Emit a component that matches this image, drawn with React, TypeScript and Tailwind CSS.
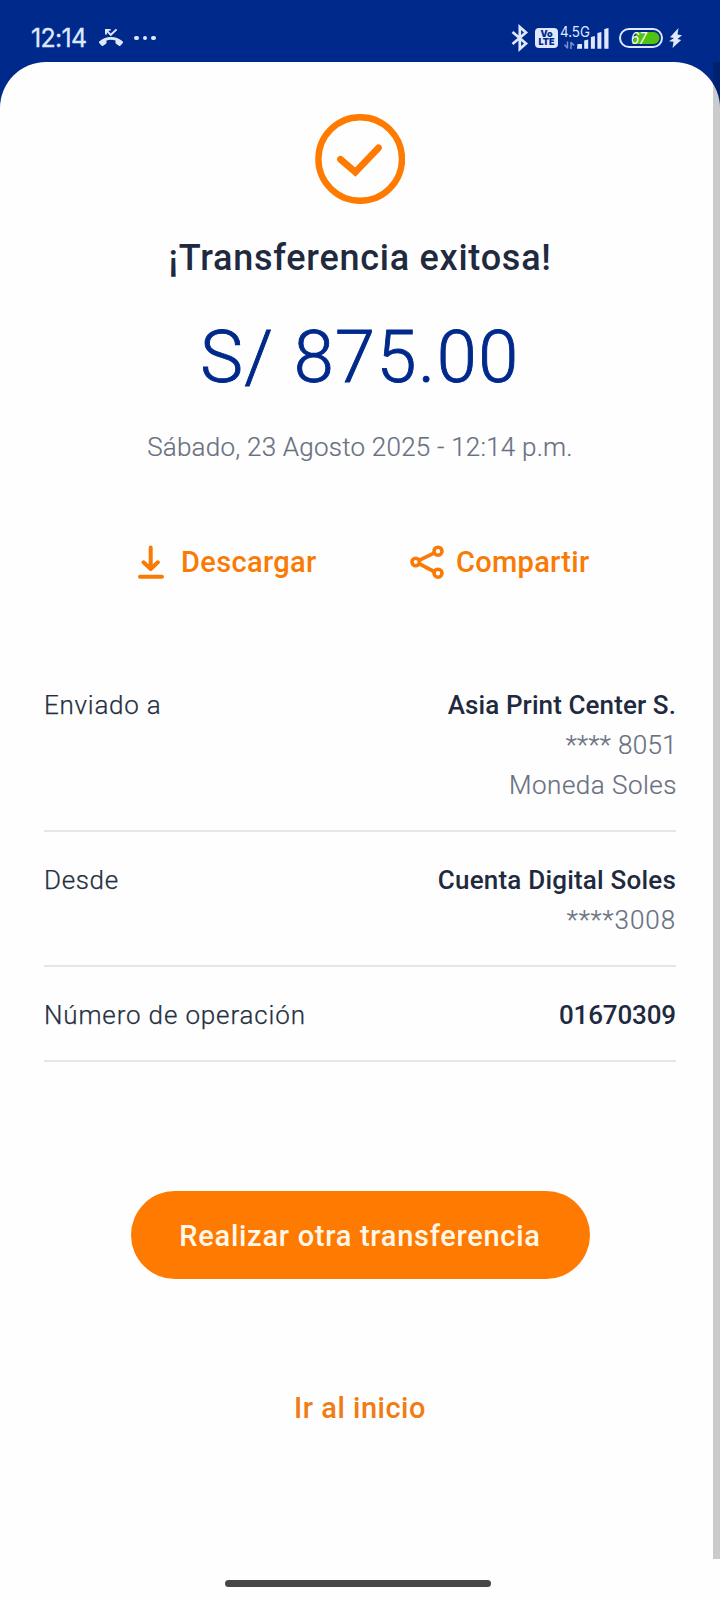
import type { ReactNode } from "react";

function MissedCallIcon() {
  return (
    <svg width="26" height="20" viewBox="0 0 26 20" className="ml-[11px]" fill="none">
      <path
        d="M1.200 13.600C4 10.600 8.200 8.900 13 8.900s9 1.700 11.800 4.700c.4.4.4 1 0 1.400l-2.500 2.700c-.4.4-1 .4-1.400.1l-2.900-2c-.4-.3-.5-.6-.5-1v-2.400c-1.400-.5-2.900-.7-4.500-.7s-3.100.2-4.500.7v2.400c0 .4-.2.8-.5 1l-2.900 2c-.4.3-1 .3-1.400-.1l-2.500-2.700c-.4-.4-.4-1 0-1.400z"
        fill="#dfe8ff"
      />
      <path d="M8 6.500V1.900h4.600M8.200 2.100l4.600 4.700 5.800-5.400" stroke="#dfe8ff" strokeWidth="1.900" />
    </svg>
  );
}

function StatusBar() {
  return (
    <header className="flex h-[62px] items-start justify-between pt-[23px] pr-[38px] pl-[31px] text-[#dfe8ff]">
      <div className="flex h-[30px] items-center">
        <span className="w-[56px] font-['Inter',sans-serif] text-[25px] leading-[30px] tracking-[-0.7px] whitespace-nowrap [-webkit-text-stroke:0.3px]">
          12:14
        </span>
        <MissedCallIcon />
        <div className="ml-[10px] flex gap-1">
          <i className="size-[4.500px] rounded-full bg-[#dfe8ff]" />
          <i className="size-[4.500px] rounded-full bg-[#dfe8ff]" />
          <i className="size-[4.500px] rounded-full bg-[#dfe8ff]" />
        </div>
      </div>
      <div className="flex h-[30px] items-center">
        <svg width="18" height="28" viewBox="0 0 18 28" fill="none" stroke="#dfe8ff" strokeWidth="2.700">
          <path d="M1.500 8l13.500 11.500-6.200 5.500V3l6.200 5.500L1.500 20" />
        </svg>
        <div className="ml-[6px] flex h-5 w-[23px] flex-col items-center justify-center rounded-[4px] bg-[#dfe8ff] font-['Inter',sans-serif] text-[9px] leading-[8px] font-black text-[#00298c]">
          <span>Vo</span>
          <span>LTE</span>
        </div>
        <svg width="51" height="28" viewBox="0 0 51 28" className="ml-[2px]" fill="#dfe8ff">
          <text x="0" y="13" fontFamily="Inter, sans-serif" fontSize="14.500" textLength="30" lengthAdjust="spacingAndGlyphs">
            4.5G
          </text>
          <path d="M17.500 20h4.500v4.700h-5zM24.200 16.500l4-1v9.200h-4zM30.900 13l4-1v12.700h-4zM37.400 9l4-1v16.700h-4zM44.300 5l4.200-1v20.700h-4.200z" />
          <path d="M7.500 17.500v7M7.500 24l-3-3.200M11 25v-7M11 18.200l3 3.200" stroke="#7d93cf" strokeWidth="1.500" fill="none" />
        </svg>
        <svg width="44" height="20" viewBox="0 0 44 20" className="ml-[8px]">
          <path d="M18 4h16.500a6 6 0 0 1 0 12H13z" fill="#4fc410" />
          <rect x="1" y="1" width="42" height="18" rx="9" fill="none" stroke="#dfe8ff" strokeWidth="2" />
          <text x="12" y="15.500" fill="#ffffff" fontFamily="Inter, sans-serif" fontSize="15.500" fontStyle="italic" textLength="16" lengthAdjust="spacingAndGlyphs">
            67
          </text>
        </svg>
        <svg width="13" height="20" viewBox="0 0 13 20" className="ml-[6px]" fill="#dfe8ff">
          <path d="M9.500 0L1 9.200l4 .8L0 13.200l4.500.6L3.500 20l8.700-8-3.700-.9L13 7.200l-4.500-.6z" />
        </svg>
      </div>
    </header>
  );
}

function SuccessIcon() {
  return (
    <svg width="90" height="90" viewBox="0 0 90 90" fill="none" stroke="#ff7a00">
      <circle cx="45.200" cy="45" r="41.800" strokeWidth="6.400" />
      <path d="M25.500 45.300L40.300 58L63.500 33.800" strokeWidth="6.800" strokeLinecap="round" />
    </svg>
  );
}

function DownloadIcon() {
  return (
    <svg width="26" height="34" viewBox="0 0 26 34" fill="none" stroke="#f97a05" strokeWidth="4" strokeLinecap="round">
      <path d="M12.700 2.500v21M5.500 17.300l7.200 6.700 7.200-6.700" strokeLinejoin="round" />
      <path d="M2 31.800h22" />
    </svg>
  );
}

function ShareIcon() {
  return (
    <svg width="34" height="34" viewBox="0 0 34 34" fill="none" stroke="#f97a05" strokeWidth="3.600">
      <circle cx="5.700" cy="17" r="3.700" />
      <circle cx="28" cy="6.200" r="4" />
      <circle cx="28" cy="28.200" r="4" />
      <path d="M9.500 15.200L24 8.200M9.500 18.800L24 26.500" strokeWidth="3.700" />
    </svg>
  );
}

function Row({ label, labelClass, children }: { label: string; labelClass: string; children: ReactNode }) {
  return (
    <div className="flex justify-between border-b-2 border-[#e6e6e6] pt-7 pb-[25px] text-[26px] leading-10 font-light text-[#697080]">
      <span className={`text-[#252f40] [-webkit-text-stroke:0.25px] ${labelClass}`}>{label}</span>
      <div className="flex flex-col items-end">{children}</div>
    </div>
  );
}

export default function App() {
  return (
    <div className="relative flex h-[1600px] w-[720px] flex-col overflow-hidden bg-[#00298c] font-['Roboto',sans-serif] whitespace-nowrap">
      <StatusBar />
      <main className="flex flex-1 flex-col items-center rounded-t-[46px] bg-[#fefefe] pt-[52px]">
        <SuccessIcon />
        <h1 className="mt-[34px] text-[36px] leading-10 font-medium tracking-[0.75px] text-[#1f2a40]">
          ¡Transferencia exitosa!
        </h1>
        <p className="mt-[40px] text-[72px] leading-[80px] font-light tracking-[1.55px] text-[#00298c] [-webkit-text-stroke:0.9px]">
          S/ 875.00
        </p>
        <p className="mt-[29px] text-[26px] leading-10 font-light tracking-[0.22px] text-[#697080] [-webkit-text-stroke:0.2px]">
          Sábado, 23 Agosto 2025 - 12:14 p.m.
        </p>
        <div className="mt-[75px] flex h-10 w-full items-center pl-[138px] text-[29px] leading-10 font-medium text-[#f97a05]">
          <button className="flex w-[272px] items-center gap-[17px]">
            <DownloadIcon />
            <span className="tracking-[0.35px]">Descargar</span>
          </button>
          <button className="flex items-center gap-3">
            <ShareIcon />
            <span className="tracking-[0.3px]">Compartir</span>
          </button>
        </div>
        <section className="mt-[75px] flex w-[632px] flex-col">
          <Row label="Enviado a" labelClass="tracking-[0.75px]">
            <span className="font-medium tracking-[0.1px] text-[#1f2a40]">Asia Print Center S.</span>
            <span className="-mr-px tracking-[0.35px] [-webkit-text-stroke:0.2px]">**** 8051</span>
            <span className="-mr-px tracking-[0.5px] [-webkit-text-stroke:0.2px]">Moneda Soles</span>
          </Row>
          <Row label="Desde" labelClass="tracking-[0.65px]">
            <span className="font-medium tracking-[0.2px] text-[#1f2a40]">Cuenta Digital Soles</span>
            <span className="tracking-[0.94px] [-webkit-text-stroke:0.2px]">****3008</span>
          </Row>
          <Row label="Número de operación" labelClass="tracking-[0.85px]">
            <span className="font-medium tracking-[-0.15px] text-[#1f2a40]">01670309</span>
          </Row>
        </section>
        <button className="mt-[129px] h-[88px] w-[459px] rounded-full bg-[#ff7a00] pt-px text-[29px] leading-10 font-medium tracking-[0.72px] text-[#fff8ea]">
          Realizar otra transferencia
        </button>
        <button className="mt-[109px] text-[29px] leading-10 font-medium tracking-[0.51px] text-[#f07d14]">
          Ir al inicio
        </button>
      </main>
      <div className="absolute top-[62px] right-0 h-[1497px] w-[7px] bg-black/20" />
      <div className="absolute top-[1580px] left-[225px] h-[7px] w-[266px] rounded-full bg-[#464746]" />
    </div>
  );
}
